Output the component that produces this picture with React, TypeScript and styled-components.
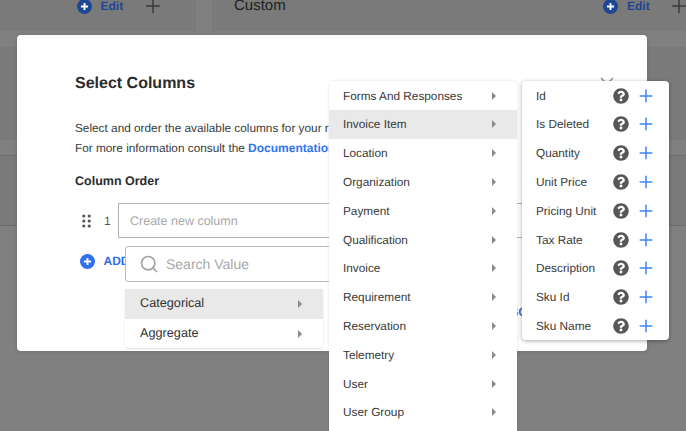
import React from "react"
import styled, { createGlobalStyle } from "styled-components"
import { FaQuestionCircle } from "react-icons/fa"
import { Search, Plus } from "lucide-react"

const GROUPS = [
  "Forms And Responses",
  "Invoice Item",
  "Location",
  "Organization",
  "Payment",
  "Qualification",
  "Invoice",
  "Requirement",
  "Reservation",
  "Telemetry",
  "User",
  "User Group",
]

const FIELDS = ["Id", "Is Deleted", "Quantity", "Unit Price", "Pricing Unit", "Tax Rate", "Description", "Sku Id", "Sku Name"]

const CirclePlus = ({ color, size = 15 }: { color: string; size?: number }) => (
  <svg width={size} height={size} viewBox="0 0 16 16">
    <circle cx="8" cy="8" r="8" fill={color} />
    <path d="M8 4.2v7.6M4.2 8h7.6" stroke="#fff" strokeWidth="2" fill="none" />
  </svg>
)

const Grip = () => (
  <svg width="9" height="14" viewBox="0 0 9 14">
    {[1.8, 7.2].map(x =>
      [2, 7, 12].map(y => <circle key={`${x}-${y}`} cx={x} cy={y} r="1.6" fill="#555" />)
    )}
  </svg>
)

const EditActions = () => (
  <EditGroup>
    <CirclePlus color="#1d4696" />
    <EditLabel>Edit</EditLabel>
    <DimPlus size={22} strokeWidth={1.6} />
  </EditGroup>
)

const App = () => {
  return (
    <>
      <GlobalStyle />
      <Page>
        <TopBand>
          <TopCard $width="196px" $inset="76.5px">
            <EditActions />
          </TopCard>
          <TopCard $grow $inset="22px">
            <CustomLabel>Custom</CustomLabel>
            <EditActions />
          </TopCard>
        </TopBand>
        <DarkSection $height="93px" />
        <LightSection $height="15px" />
        <DarkSection $height="71px" $lined />

        <Modal>
          <Title>Select Columns</Title>
          <CloseMark width="14" height="14" viewBox="0 0 14 14">
            <path d="M1 1l12 12M13 1L1 13" stroke="#8a93a3" strokeWidth="1.5" fill="none" />
          </CloseMark>
          <Intro>
            Select and order the available columns for your report.
            <br />
            For more information consult the <DocLink>Documentation</DocLink>
          </Intro>
          <SectionLabel>Column Order</SectionLabel>
          <ColumnRow>
            <GripWrap>
              <Grip />
            </GripWrap>
            <RowNumber>1</RowNumber>
            <ColumnInput>Create new column</ColumnInput>
          </ColumnRow>
          <AddRow>
            <CirclePlus color="#2f6ff0" />
            <AddLabel>ADD COLUMN</AddLabel>
          </AddRow>
          <Footer>
            <AddLabel>DISCARD</AddLabel>
          </Footer>

          <Popover>
            <SearchBox>
              <Search size={20} strokeWidth={2} color="#a3a3a3" />
              <SearchText>Search Value</SearchText>
            </SearchBox>
            <TypeList>
              <TypeRow $active>
                <TypeName>Categorical</TypeName>
                <Caret />
              </TypeRow>
              <TypeRow>
                <TypeName>Aggregate</TypeName>
                <Caret />
              </TypeRow>
            </TypeList>
          </Popover>
        </Modal>

        <GroupMenu>
          {GROUPS.map(name => (
            <GroupRow key={name} $active={name === "Invoice Item"}>
              {name}
              <Caret />
            </GroupRow>
          ))}
        </GroupMenu>

        <FieldMenu>
          {FIELDS.map(name => (
            <FieldRow key={name}>
              <FieldName>{name}</FieldName>
              <FaQuestionCircle size={16} color="#575757" />
              <BluePlus size={20} strokeWidth={1.8} />
            </FieldRow>
          ))}
        </FieldMenu>
      </Page>
    </>
  )
}

export default App

const GlobalStyle = createGlobalStyle`
  html, body {
    margin: 0;
    padding: 0;
    background: #808080;
    overflow: hidden;
  }
  * {
    box-sizing: border-box;
  }
`

const Page = styled.div`
  position: relative;
  width: 686px;
  height: 431px;
  overflow: hidden;
  background: #808080;
  font-family: "Liberation Sans", Arial, sans-serif;
  text-rendering: geometricPrecision;
  color: #333;
`

const TopBand = styled.div`
  display: flex;
  gap: 16px;
  height: 47px;
  padding-bottom: 16px;
`

const TopCard = styled.div<{ $width?: string; $grow?: boolean; $inset: string }>`
  display: flex;
  align-items: flex-start;
  justify-content: space-between;
  width: ${p => p.$width || "auto"};
  flex: ${p => (p.$grow ? 1 : "none")};
  padding-left: ${p => p.$inset};
  background: #7a7a7a;
`

const EditGroup = styled.div`
  display: flex;
  align-items: center;
  flex: none;
  height: 10px;
  margin: 1px -4px 0 0;
`

const EditLabel = styled.span`
  margin-left: 9px;
  width: 41px;
  font-size: 12px;
  line-height: 10px;
  font-weight: 700;
  color: #1d4696;
`

const DimPlus = styled(Plus)`
  color: #3a3a3a;
`

const CustomLabel = styled.span`
  margin-top: 1px;
  font-size: 15px;
  line-height: 10px;
  color: #222;
`

const DarkSection = styled.div<{ $height: string; $lined?: boolean }>`
  height: ${p => p.$height};
  background: #7a7a7a;
  border-top: ${p => (p.$lined ? "1px solid #6b6b6b" : "0")};
  border-bottom: ${p => (p.$lined ? "1px solid #6b6b6b" : "0")};
`

const LightSection = styled.div<{ $height: string }>`
  height: ${p => p.$height};
  background: #808080;
`

const Modal = styled.div`
  position: absolute;
  left: 17px;
  top: 35px;
  width: 630px;
  height: 316px;
  padding: 39px 57px 0 58px;
  background: #fff;
  border-radius: 4px;
  box-shadow: 0 1px 4px rgba(0, 0, 0, 0.12);
`

const Title = styled.h2`
  margin: 0;
  font-size: 16px;
  line-height: 20px;
  font-weight: 700;
  color: #2b2b2b;
`

const CloseMark = styled.svg`
  position: absolute;
  right: 33px;
  top: 42px;
`

const Intro = styled.p`
  margin: 24px 0 0;
  font-size: 11.8px;
  line-height: 20px;
  white-space: nowrap;
  color: #3a3a3a;
`

const DocLink = styled.span`
  font-weight: 700;
  font-size: 12px;
  color: #2f74f0;
`

const SectionLabel = styled.div`
  margin-top: 13px;
  font-size: 12.5px;
  line-height: 20px;
  font-weight: 700;
  color: #2b2b2b;
`

const ColumnRow = styled.div`
  display: flex;
  align-items: center;
  height: 35px;
  margin-top: 12px;
`

const GripWrap = styled.div`
  display: flex;
  width: 29px;
  padding-left: 7px;
`

const RowNumber = styled.span`
  width: 14px;
  font-size: 12px;
  color: #555;
`

const ColumnInput = styled.div`
  flex: 1;
  height: 35px;
  padding-left: 11px;
  border: 1px solid #b3b3b3;
  font-size: 12.5px;
  line-height: 34px;
  color: #a8a8a8;
`

const AddRow = styled.div`
  display: flex;
  align-items: center;
  gap: 9px;
  height: 16px;
  margin: 15px 0 0 4.5px;
`

const AddLabel = styled.span`
  font-size: 12px;
  font-weight: 700;
  color: #2f6ff0;
  white-space: nowrap;
`

const Footer = styled.div`
  display: flex;
  justify-content: flex-end;
  height: 16px;
  margin: 36px 37px 0 0;
`

const Popover = styled.div`
  position: absolute;
  left: 108px;
  top: 211px;
  display: flex;
  flex-direction: column;
  gap: 7px;
  width: 240px;
`

const SearchBox = styled.div`
  display: flex;
  align-items: center;
  gap: 7px;
  height: 36px;
  padding-left: 13px;
  background: #fff;
  border: 1px solid #b9b9b9;
  border-radius: 3px;
`

const SearchText = styled.span`
  font-size: 14px;
  color: #a8a8a8;
`

const TypeList = styled.div`
  width: 198px;
  background: #fff;
  border-radius: 0 0 3px 3px;
  box-shadow: 0 1px 2px rgba(0, 0, 0, 0.14);
`

const TypeRow = styled.div<{ $active?: boolean }>`
  display: flex;
  align-items: center;
  justify-content: space-between;
  height: ${p => (p.$active ? "30px" : "29px")};
  padding: 0 21px 0 15px;
  background: ${p => (p.$active ? "#e9e9e9" : "transparent")};
`

const TypeName = styled.span`
  margin-top: -2px;
  font-size: 12.7px;
  color: #333;
`

const Caret = styled.span`
  width: 0;
  height: 0;
  border-style: solid;
  border-width: 4px 0 4px 4px;
  border-color: transparent transparent transparent #8a8a8a;
`

const GroupMenu = styled.div`
  position: absolute;
  left: 329px;
  top: 81px;
  width: 188px;
  height: 360px;
  background: #fff;
  border-radius: 4px 4px 0 0;
  box-shadow: 0 0 3px rgba(0, 0, 0, 0.12);
`

const GroupRow = styled.div<{ $active?: boolean }>`
  display: flex;
  align-items: center;
  justify-content: space-between;
  height: 28.8px;
  padding: 0.6px 21px 0 14px;
  font-size: 11.8px;
  color: #3a3a3a;
  background: ${p => (p.$active ? "#e9e9e9" : "transparent")};
`

const FieldMenu = styled.div`
  position: absolute;
  left: 522px;
  top: 81px;
  width: 147px;
  height: 259px;
  background: #fff;
  border-radius: 4px;
  box-shadow: 0 1px 4px rgba(0, 0, 0, 0.35);
`

const FieldRow = styled.div`
  display: flex;
  align-items: center;
  height: 28.8px;
  padding: 0.6px 13px 0 14px;
`

const FieldName = styled.span`
  flex: 1;
  font-size: 11.8px;
  color: #3a3a3a;
`

const BluePlus = styled(Plus)`
  margin-left: 7px;
  color: #3f86f7;
`
